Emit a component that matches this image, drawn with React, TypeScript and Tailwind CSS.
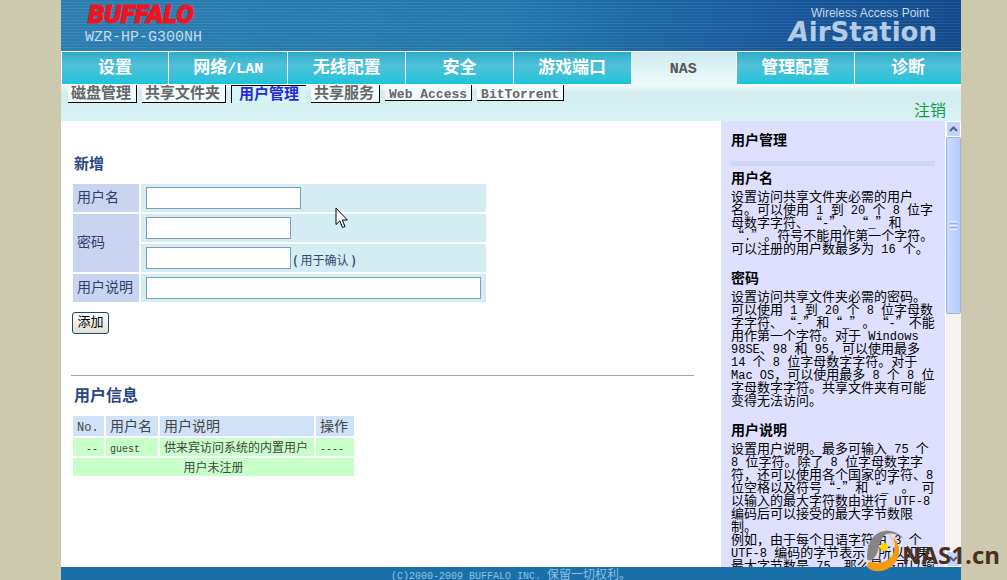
import React from 'react';

interface NavItem {
  label: string;
  active?: boolean;
}

interface HelpSection {
  title: string;
  lines: string[];
}

const navItems: NavItem[] = [
  { label: '设置' },
  { label: '网络/LAN' },
  { label: '无线配置' },
  { label: '安全' },
  { label: '游戏端口' },
  { label: 'NAS', active: true },
  { label: '管理配置' },
  { label: '诊断' },
];

const subItems: NavItem[] = [
  { label: '磁盘管理' },
  { label: '共享文件夹' },
  { label: '用户管理', active: true },
  { label: '共享服务' },
  { label: 'Web Access' },
  { label: 'BitTorrent' },
];

const helpSections: HelpSection[] = [
  {
    title: '用户名',
    lines: [
      '设置访问共享文件夹必需的用户',
      '名。可以使用 1 到 20 个 8 位字',
      '母数字字符、“-”、“_”和',
      '“.”。符号不能用作第一个字符。',
      '可以注册的用户数最多为 16 个。',
    ],
  },
  {
    title: '密码',
    lines: [
      '设置访问共享文件夹必需的密码。',
      '可以使用 1 到 20 个 8 位字母数',
      '字字符、“-”和“_”。“-”不能',
      '用作第一个字符。对于 Windows',
      '98SE、98 和 95，可以使用最多',
      '14 个 8 位字母数字字符。对于',
      'Mac OS，可以使用最多 8 个 8 位',
      '字母数字字符。共享文件夹有可能',
      '变得无法访问。',
    ],
  },
  {
    title: '用户说明',
    lines: [
      '设置用户说明。最多可输入 75 个',
      '8 位字符。除了 8 位字母数字字',
      '符，还可以使用各个国家的字符、8',
      '位空格以及符号“-”和“_”。 可',
      '以输入的最大字符数由进行 UTF-8',
      '编码后可以接受的最大字节数限',
      '制。',
      '例如，由于每个日语字符由 3 个',
      'UTF-8 编码的字节表示，所以如果',
      '最大字节数是 75，那么最多可以输',
    ],
  },
];

// Latin runs are set in a smaller monospace so they take half a CJK cell
const Mixed: React.FC<{ text: string; latin: string }> = ({ text, latin }) => (
  <>
    {text.split(/([\x20-\x7e]+)/).map((part, i) =>
      i % 2 === 1 ? (
        <span key={i} className={`font-['Liberation_Mono',monospace] leading-none whitespace-pre ${latin}`}>
          {part}
        </span>
      ) : (
        part
      )
    )}
  </>
);

const Header: React.FC = () => (
  <header className="h-[51px] shrink-0 flex justify-between overflow-hidden pl-6 pr-6 bg-[repeating-linear-gradient(0deg,#ffffff14_0_1px,transparent_1px_3px),linear-gradient(100deg,#2b7db0_0%,#2277ad_50%,#17569a_80%,#124a8a_100%)]">
    <div className="pt-px">
      <div className="h-[26px] leading-[26px] pl-[3px] text-[26px] font-black italic text-[#f0141e] font-['Roboto',sans-serif] [-webkit-text-stroke:1px_#f0141e]">
        BUFFALO
      </div>
      <div className="leading-[22px] text-[15px] text-[#c3dcf0] font-['Liberation_Mono',monospace]">WZR-HP-G300NH</div>
    </div>
    <div className="text-right pt-1.5">
      <div className="text-xs leading-[14px] pr-2 text-[#c3d9ee] font-['Liberation_Sans',sans-serif]">Wireless Access Point</div>
      <div className="text-[26px] leading-6 font-bold text-[#b4cbe6] font-['DejaVu_Sans',sans-serif]">
        <span className="italic">A</span>irStation
      </div>
    </div>
  </header>
);

const MainNav: React.FC = () => (
  <nav className="grid grid-cols-[107fr_119fr_118fr_107fr_118fr_105fr_118fr_107fr] h-[34px] shrink-0 border-t border-white bg-linear-to-b from-[#cfebef] to-[#eefafa]">
    {navItems.map((item) => (
      <a
        key={item.label}
        href="#"
        className={
          item.active
            ? 'flex items-center justify-center pb-1 text-[17px] font-bold text-[#555]'
            : 'flex items-center justify-center pb-1 text-[17px] font-bold text-white border-l border-b border-white bg-linear-to-b from-[#2bacca] via-[#4fc0d8] via-40% to-[#18c4da]'
        }
      >
        <span className="leading-5">
          <Mixed text={item.label} latin="text-[15px]" />
        </span>
      </a>
    ))}
  </nav>
);

const SubNav: React.FC = () => (
  <div className="h-9 shrink-0 flex justify-between items-start pl-[7px] pr-[15px] bg-linear-to-b from-[#f0fbfb] via-[#d3ecef] via-20% to-[#d8f5f6]">
    <nav className="flex items-start gap-[5px] whitespace-nowrap">
      {subItems.map((item) => (
        <a
          key={item.label}
          href="#"
          className={
            item.active
              ? 'h-[18px] px-[7px] leading-[14px] text-[15px] font-bold text-[#2a2ae0] border-l border-t border-black bg-[#d6f5f6]'
              : /^[A-Z]/.test(item.label)
                ? 'h-4 px-1 leading-[14px] text-[15px] font-bold text-[#666] border-r border-b border-black bg-[#f2fcfc]'
                : 'h-[18px] pl-[3px] pr-[5px] leading-[14px] text-[15px] font-bold text-[#666] border-r border-b border-black bg-[#f2fcfc]'
          }
        >
          <Mixed text={item.label} latin="text-[13px]" />
        </a>
      ))}
    </nav>
    <a href="#" className="self-end leading-6 text-base text-[#169a48]">
      注销
    </a>
  </div>
);

const labelCell = 'w-[66px] bg-[#c8d4f0] px-1 pb-1 text-left font-normal';
const fieldCell = 'h-7 bg-[#d3edf3] px-[5px]';
const inputBox = 'block h-[22px] bg-white border border-[#7f9db9] px-1 outline-none';

const AddUserForm: React.FC = () => (
  <form onSubmit={(e) => e.preventDefault()}>
    <h2 className="pl-[3px] text-[15px] leading-5 font-bold text-[#294685]">新增</h2>
    <table className="mt-[9px] w-[417px] border-separate border-spacing-[2px] text-sm leading-5 text-[#2d3d6e]">
      <tbody>
        <tr>
          <th className={labelCell}>
            <label htmlFor="user">用户名</label>
          </th>
          <td className={fieldCell}>
            <input id="user" type="text" className={`${inputBox} w-[155px]`} />
          </td>
        </tr>
        <tr>
          <th className={labelCell} rowSpan={2}>
            <label htmlFor="pass">密码</label>
          </th>
          <td className={fieldCell}>
            <input id="pass" type="password" className={`${inputBox} w-[145px]`} />
          </td>
        </tr>
        <tr>
          <td className={fieldCell}>
            <div className="flex items-center">
              <input id="confirm" type="password" className={`${inputBox} w-[145px]`} />
              <label htmlFor="confirm" className="flex gap-[3px] text-xs text-[#2f4a72] pl-0.5 pt-1">
                <b>(</b>
                <span>用于确认</span>
                <b>)</b>
              </label>
            </div>
          </td>
        </tr>
        <tr>
          <th className={labelCell}>
            <label htmlFor="desc">用户说明</label>
          </th>
          <td className={fieldCell}>
            <input id="desc" type="text" className={`${inputBox} w-[335px]`} />
          </td>
        </tr>
      </tbody>
    </table>
    <button
      type="submit"
      className="mt-2 ml-px block w-[37px] h-[22px] rounded-[3px] border border-[#1c4870] bg-linear-to-b from-white to-[#e2dfd2] pb-1 text-[13px] leading-4 text-black"
    >
      添加
    </button>
  </form>
);

const UserTable: React.FC = () => (
  <section>
    <h2 className="pl-[3px] text-base leading-5 font-bold text-[#294685]">用户信息</h2>
    <table className="mt-2.5 w-[285px] table-fixed border-separate border-spacing-[2px] whitespace-nowrap text-[#444]">
      <colgroup>
        <col className="w-[31px]" />
        <col className="w-[52px]" />
        <col className="w-[154px]" />
        <col className="w-[38px]" />
      </colgroup>
      <thead>
        <tr className="h-5 text-sm leading-[18px] text-left">
          {['No.', '用户名', '用户说明', '操作'].map((h) => (
            <th key={h} className="bg-[#cfe2f8] px-1 pb-0.5 font-normal">
              <Mixed text={h} latin="text-[12px]" />
            </th>
          ))}
        </tr>
      </thead>
      <tbody className="text-xs leading-4">
        <tr className="h-[18px]">
          <td className="bg-[#c8ffc8] px-1.5 text-right">
            <Mixed text="--" latin="text-[10px]" />
          </td>
          <td className="bg-[#c8ffc8] px-1">
            <Mixed text="guest" latin="text-[10px]" />
          </td>
          <td className="bg-[#c8ffc8] px-1">供来宾访问系统的内置用户</td>
          <td className="bg-[#c8ffc8] px-1">
            <Mixed text="----" latin="text-[10px]" />
          </td>
        </tr>
        <tr className="h-[18px]">
          <td colSpan={4} className="bg-[#c8ffc8] text-center">
            用户未注册
          </td>
        </tr>
      </tbody>
    </table>
  </section>
);

const HelpPanel: React.FC = () => (
  <aside className="w-60 shrink-0 flex overflow-hidden bg-[#dfe0ff] text-black">
    <div className="flex-1 min-w-0 pl-2.5 pt-2 pr-2.5">
      <h3 className="text-sm leading-5 font-bold">用户管理</h3>
      <div className="mt-3 mb-1 h-[5px] bg-[#ccd9f4]" />
      {helpSections.map((section) => (
        <section key={section.title} className="mb-4">
          <h4 className="text-sm leading-[15px] font-bold pb-1">{section.title}</h4>
          <p className="text-[13px] leading-[13px] whitespace-nowrap [text-spacing-trim:space-all]">
            {section.lines.map((line, i) => (
              <span key={i} className="block h-[13px]">
                <Mixed text={line} latin="text-[12px]" />
              </span>
            ))}
          </p>
        </section>
      ))}
    </div>
    <div className="w-4 shrink-0 flex flex-col bg-[#f5f2ef] border-l border-white">
      <button
        type="button"
        aria-label="Scroll up"
        className="h-4 shrink-0 flex items-center justify-center rounded-xs border border-white bg-[#c4d5fc]"
      >
        <svg width="9" height="6" viewBox="0 0 9 6" fill="none" stroke="#4d6185" strokeWidth="2">
          <path d="M1 5l3.500-3.500L8 5" />
        </svg>
      </button>
      <div className="h-[177px] shrink-0 flex flex-col items-center justify-center gap-px rounded-xs border border-[#98b4ea] bg-linear-to-r from-[#cbdafd] to-[#b5cdfb]">
        <span className="w-[7px] h-px bg-[#eef4fe]" />
        <span className="w-[7px] h-px bg-[#8cb0f8]" />
        <span className="w-[7px] h-px bg-[#eef4fe]" />
        <span className="w-[7px] h-px bg-[#8cb0f8]" />
        <span className="w-[7px] h-px bg-[#eef4fe]" />
      </div>
      <div className="flex-1" />
      <button
        type="button"
        aria-label="Scroll down"
        className="h-4 shrink-0 flex items-center justify-center rounded-xs border border-white bg-[#c4d5fc]"
      >
        <svg width="9" height="6" viewBox="0 0 9 6" fill="none" stroke="#4d6185" strokeWidth="2">
          <path d="M1 1l3.500 3.500L8 1" />
        </svg>
      </button>
    </div>
  </aside>
);

const Watermark: React.FC = () => (
  <div className="absolute right-[7px] bottom-0 h-[58px] flex items-end pointer-events-none">
    <svg width="35" height="58" viewBox="4 0 35 58" overflow="visible">
      <path d="M18 2C25 8 31 17 32 27C29 16 24 8 18 2Z" fill="#f3b878" />
      <path d="M5 38C2 25 9 10 22 9C30 8 37 12 41 17C33 11 25 10 21 14C15 19 17 30 11 36C9 38 7 39 5 38Z" fill="#858585" />
      <path d="M30 15C38 22 38 35 31 42C25 49 13 52 5 46C3 43 5 39 9 40C19 43 28 38 31 30C33 25 32 20 30 15Z" fill="#f79a0c" />
      <circle cx="21" cy="25" r="4" fill="#fbd50a" />
    </svg>
    <span className="text-2xl leading-[50px] font-bold text-[#4b301c] font-['Open_Sans',sans-serif]">NAS1.cn</span>
  </div>
);

export default function App() {
  return (
    <div className="relative h-screen overflow-hidden pl-[61px] pr-[46px] bg-[#cdc9ae] font-['Noto_Sans_CJK_SC',sans-serif]">
      <div className="h-full flex flex-col bg-white">
        <Header />
        <MainNav />
        <SubNav />
        <div className="flex-1 min-h-0 flex">
          <main className="flex-1 min-w-0 pl-2.5 pr-[27px] pt-8">
            <AddUserForm />
            <hr className="mt-[41px] mb-2 border-t border-[#aca899]" />
            <UserTable />
          </main>
          <HelpPanel />
        </div>
        <footer className="h-[13px] shrink-0 bg-[#1a6fa8] text-center text-xs leading-[13px] text-[#8fc1e4]">
          <Mixed text="(C)2000-2009 BUFFALO INC. 保留一切权利。" latin="text-[10px]" />
        </footer>
      </div>
      <svg className="absolute left-[335px] top-[207px]" width="13" height="22" viewBox="0 0 13 22">
        <path d="M1 1V17.500L4.800 14L7.500 20.500L10 19.500L7.300 13H12.300Z" fill="#fff" stroke="#000" />
      </svg>
      <Watermark />
    </div>
  );
}
